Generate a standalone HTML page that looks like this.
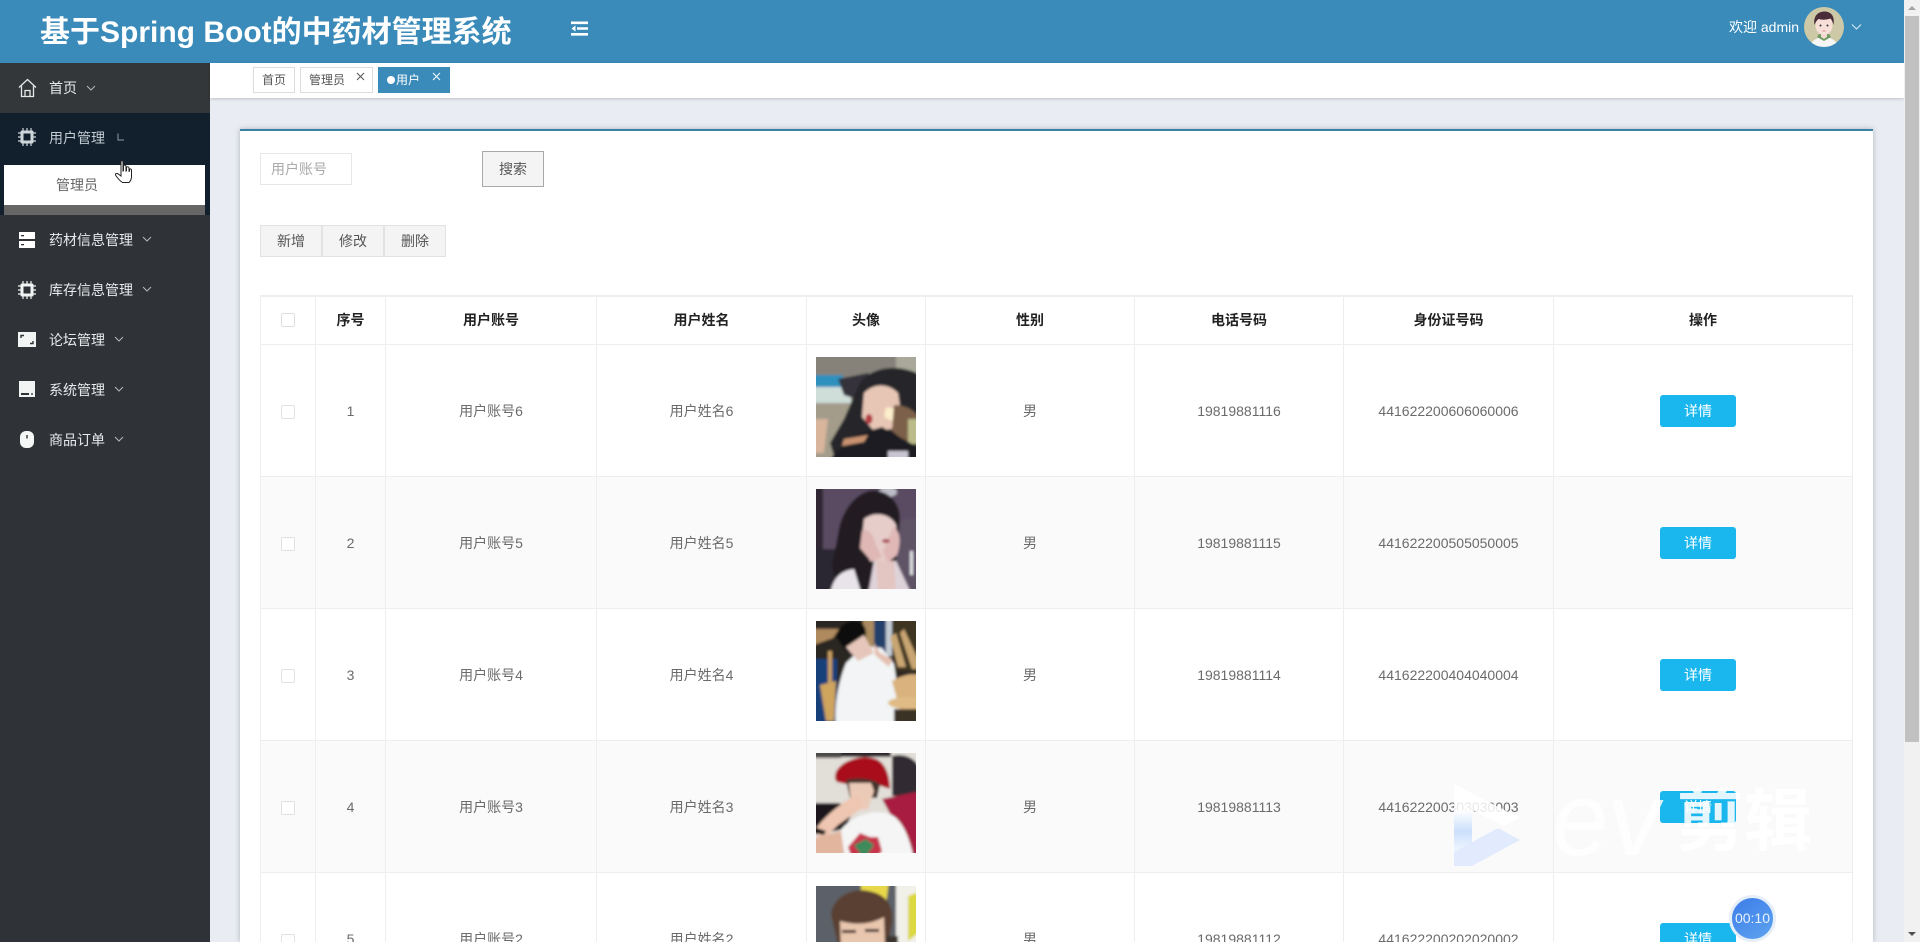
<!DOCTYPE html>
<html lang="zh"><head><meta charset="utf-8"><title>基于Spring Boot的中药材管理系统</title>
<style>
*{box-sizing:border-box}
html,body{margin:0;padding:0;width:1920px;height:942px;overflow:hidden;background:#e9ecf2;font-family:"Liberation Sans","Noto Sans CJK SC",sans-serif;font-size:14px;color:#666}
#wrap{position:absolute;left:0;top:0;width:1920px;height:942px;overflow:hidden;background:#e9ecf2}
.a{position:absolute}
#hd{left:0;top:0;width:1904px;height:63px;background:#3a8bba}
#title{left:40px;top:12px;font-size:30px;line-height:42px;font-weight:bold;color:#fff;white-space:nowrap}
#side{left:0;top:63px;width:210px;height:879px;background:#2f3337}
.mi{left:49px;font-size:14px;line-height:20px;color:#e8eaec;white-space:nowrap}
.ch{width:10px;height:10px}
#tabs{left:210px;top:63px;width:1694px;height:35px;background:#fff;box-shadow:0 1px 3px rgba(0,0,0,.18)}
.tab{top:67px;height:26px;line-height:24px;border:1px solid #ddd;background:#fff;font-size:12px;color:#555;white-space:nowrap}
.x{position:absolute;width:12px;height:12px}
#card{left:240px;top:129px;width:1633px;height:813px;background:#fff;border-top:2px solid #3d80a6;box-shadow:0 0 5px rgba(60,70,90,.35)}
.btn{top:225px;height:32px;width:62px;background:#f4f4f4;border:1px solid #e2e2e2;text-align:center;line-height:30px;color:#555;font-size:14px}
table{position:absolute;left:260px;top:295px;width:1592px;height:647px;border-collapse:collapse;table-layout:fixed;border-top:2px solid #eee}
th,td{border:1px solid #eceef0;text-align:center;padding:0;font-size:14px;overflow:hidden}
th{height:48px;color:#222;font-weight:bold}
th .cb{position:relative;top:-1px}
td{height:132px;color:#6b6b6b;padding-top:1px}
tr.s td{background:#fafafa}
tr.l td{height:69px;padding:0;vertical-align:top;border-bottom:0}
tr.l td>div{height:69px;overflow:hidden}
.cb{display:inline-block;width:14px;height:14px;border:1px solid #dfe1e4;border-radius:2px;background:#fff;vertical-align:middle}
.det{display:inline-block;width:76px;height:32px;line-height:32px;background:#1ab7ef;color:#fff;border-radius:3px;margin-right:10px;font-size:14px}
.ph{display:block;width:100px;height:100px;margin:0 auto;position:relative;top:-4px}
tr.l .ph{top:0}
#sb{left:1904px;top:0;width:16px;height:942px;background:#f1f1f1}
</style></head><body><div id="wrap">
<div class="a" id="card"></div>

<div class="a" id="hd"></div>
<div class="a" id="title">基于Spring Boot的中药材管理系统</div>
<svg class="a" style="left:570px;top:20px" width="19" height="17" viewBox="0 0 19 17"><path d="M1 1.5h17v2.6H1zM7 7.2h11v2.6H7zM1 13h17v2.6H1z" fill="#fff"/><path d="M5.5 5.500L1.500 8.500l4 3z" fill="#fff"/></svg>
<div class="a" style="left:1729px;top:17px;line-height:20px;font-size:14px;color:#fff;white-space:nowrap">欢迎 admin</div>
<svg class="a" style="left:1804px;top:7px" width="40" height="40" viewBox="0 0 40 40"><defs><clipPath id="av"><circle cx="20" cy="20" r="20"/></clipPath></defs><g clip-path="url(#av)"><rect width="40" height="40" fill="#cdc9a6"/><path d="M6 40c1-7 8-10 14-10s13 3 14 10z" fill="#f6f7f4"/><path d="M13 30l7 4 7-4-2-3H15z" fill="#6e9a62"/><path d="M17 26h6v4l-3 2-3-2z" fill="#f4d8cf"/><ellipse cx="20" cy="18" rx="8.600" ry="10" fill="#f7ded6"/><path d="M10.500 18C9 9 14 4.500 20.500 4.500S31 9 29.500 18c-1-3-1.500-5-3-6.500-4 1.500-9 1.500-12 .5-2 1.500-3 3.500-4 6z" fill="#4a2d3a"/><circle cx="16.500" cy="18.500" r="1" fill="#333"/><circle cx="23.500" cy="18.500" r="1" fill="#333"/><path d="M18.500 24h3" stroke="#d98c8c" stroke-width="1"/></g></svg>
<svg class="a" style="left:1851px;top:23px" width="11" height="8" viewBox="0 0 11 8"><path d="M1 1.500l4.500 4.500L10 1.500" fill="none" stroke="#d6e8f2" stroke-width="1.100"/></svg>

<div class="a" id="side"></div>
<div class="a" style="left:0;top:63px;width:210px;height:50px;background:#343739"></div>
<div class="a" style="left:0;top:113px;width:210px;height:102px;background:#12202e"></div>
<div class="a" style="left:4px;top:165px;width:201px;height:40px;background:#fff"></div>
<div class="a" style="left:4px;top:205px;width:201px;height:10px;background:#666"></div>
<div class="a" style="left:56px;top:175px;line-height:20px;font-size:14px;color:#666">管理员</div>

<svg class="a" style="left:18px;top:78px" width="19" height="20" viewBox="0 0 19 20"><path d="M1 9.500L9.500 1.500 18 9.500M3.500 8v10.500h12V8M7 18.500v-6h5v6" fill="none" stroke="#e6e8e8" stroke-width="1.300"/></svg>
<div class="a mi" style="top:78px">首页</div>
<svg class="a ch" style="left:86px;top:83px" viewBox="0 0 10 10"><path d="M1 3l4 4 4-4" fill="none" stroke="#b5b9bc"/></svg>

<svg class="a" style="left:18px;top:128px" width="18" height="18" viewBox="0 0 18 18"><path d="M4 2.500h10a1.500 1.500 0 0 1 1.500 1.500v10a1.500 1.500 0 0 1-1.500 1.500H4A1.500 1.500 0 0 1 2.500 14V4A1.500 1.500 0 0 1 4 2.500z" fill="#cfd6da"/><rect x="5.500" y="5.500" width="7" height="7" fill="#12202e"/><path d="M5 0v18M9 0v18M13 0v18M0 5h18M0 9h18M0 13h18" stroke="#cfd6da" stroke-width="1.200" stroke-dasharray="2.500 13 2.500 0"/></svg>
<div class="a mi" style="top:128px;color:#c3ccd2">用户管理</div>
<svg class="a ch" style="left:117px;top:133px" viewBox="0 0 10 10"><path d="M1 .5v6.500h6" fill="none" stroke="#8f9aa3"/></svg>

<svg class="a" style="left:19px;top:232px" width="16" height="16" viewBox="0 0 16 16"><rect y="0" width="16" height="7" fill="#fff"/><rect y="9" width="16" height="7" fill="#fff"/><rect x="2" y="3" width="3" height="1.300" fill="#2f3337"/><rect x="2" y="12" width="3" height="1.300" fill="#2f3337"/></svg>
<div class="a mi" style="top:230px">药材信息管理</div>
<svg class="a ch" style="left:142px;top:234px" viewBox="0 0 10 10"><path d="M1 3l4 4 4-4" fill="none" stroke="#b5b9bc"/></svg>

<svg class="a" style="left:18px;top:281px" width="18" height="18" viewBox="0 0 18 18"><path d="M4 2.500h10a1.500 1.500 0 0 1 1.500 1.500v10a1.500 1.500 0 0 1-1.500 1.500H4A1.500 1.500 0 0 1 2.500 14V4A1.500 1.500 0 0 1 4 2.500z" fill="#f2f3f3"/><rect x="5.500" y="5.500" width="7" height="7" fill="#2f3337"/><path d="M5 0v18M9 0v18M13 0v18M0 5h18M0 9h18M0 13h18" stroke="#f2f3f3" stroke-width="1.200" stroke-dasharray="2.500 13 2.500 0"/></svg>
<div class="a mi" style="top:280px">库存信息管理</div>
<svg class="a ch" style="left:142px;top:284px" viewBox="0 0 10 10"><path d="M1 3l4 4 4-4" fill="none" stroke="#b5b9bc"/></svg>

<svg class="a" style="left:18px;top:332px" width="18" height="15" viewBox="0 0 18 15"><rect width="18" height="15" fill="#f2f3f3"/><path d="M3 6V3.500h3M15 9v2.500h-3" fill="none" stroke="#2f3337" stroke-width="1.400"/></svg>
<div class="a mi" style="top:330px">论坛管理</div>
<svg class="a ch" style="left:114px;top:334px" viewBox="0 0 10 10"><path d="M1 3l4 4 4-4" fill="none" stroke="#b5b9bc"/></svg>

<svg class="a" style="left:19px;top:381px" width="16" height="16" viewBox="0 0 16 16"><rect width="16" height="16" fill="#f2f3f3"/><rect x="2" y="12" width="8" height="2" fill="#2f3337"/><rect x="12" y="12" width="2" height="2" fill="#777"/></svg>
<div class="a mi" style="top:380px">系统管理</div>
<svg class="a ch" style="left:114px;top:384px" viewBox="0 0 10 10"><path d="M1 3l4 4 4-4" fill="none" stroke="#b5b9bc"/></svg>

<svg class="a" style="left:20px;top:431px" width="14" height="17" viewBox="0 0 14 17"><rect width="14" height="17" rx="6" fill="#f5f6f6"/><rect x="6.300" y="4" width="1.400" height="3.500" fill="#2f3337"/></svg>
<div class="a mi" style="top:430px">商品订单</div>
<svg class="a ch" style="left:114px;top:434px" viewBox="0 0 10 10"><path d="M1 3l4 4 4-4" fill="none" stroke="#b5b9bc"/></svg>

<div class="a" id="tabs"></div>
<div class="a tab" style="left:253px;width:42px;text-align:center">首页</div>
<div class="a tab" style="left:300px;width:73px;padding-left:8px">管理员<svg class="x" style="left:54px;top:3px" viewBox="0 0 12 12"><path d="M2 2l7 7M9 2L2 9" stroke="#555" fill="none"/></svg></div>
<div class="a tab" style="left:378px;width:72px;padding-left:8px;background:#3a8bba;border-color:#3a8bba;color:#fff"><span style="display:inline-block;width:8px;height:8px;border-radius:50%;background:#fff;margin-right:1px"></span>用户<svg class="x" style="left:52px;top:3px" viewBox="0 0 12 12"><path d="M2 2l7 7M9 2L2 9" stroke="#fff" fill="none"/></svg></div>

<div class="a" style="left:260px;top:153px;width:92px;height:32px;background:#fff;border:1px solid #e4e6e8;line-height:30px;padding-left:10px;color:#aaa;font-size:14px">用户账号</div>
<div class="a" style="left:482px;top:151px;width:62px;height:36px;background:#f4f4f4;border:1px solid #a9a9a9;line-height:34px;text-align:center;color:#555">搜索</div>
<div class="a btn" style="left:260px">新增</div>
<div class="a btn" style="left:322px">修改</div>
<div class="a btn" style="left:384px">删除</div>

<table>
<colgroup><col style="width:55px"><col style="width:70px"><col style="width:211px"><col style="width:210px"><col style="width:119px"><col style="width:209px"><col style="width:209px"><col style="width:210px"><col style="width:299px"></colgroup>
<tr><th><span class="cb"></span></th><th>序号</th><th>用户账号</th><th>用户姓名</th><th>头像</th><th>性别</th><th>电话号码</th><th>身份证号码</th><th>操作</th></tr>
<tr><td><span class="cb"></span></td><td>1</td><td>用户账号6</td><td>用户姓名6</td><td>
<svg class="ph" viewBox="0 0 100 100"><defs><filter id="b" x="-5%" y="-5%" width="110%" height="110%"><feGaussianBlur stdDeviation="1.200"/></filter><clipPath id="c"><rect width="100" height="100"/></clipPath></defs><g clip-path="url(#c)"><g filter="url(#b)"><rect x="-5" y="-5" width="110" height="110" fill="#86827a"/><rect x="80" y="-5" width="25" height="22" fill="#a9a89a"/><rect x="-5" y="18" width="32" height="12" fill="#2f90bd"/><rect x="-5" y="30" width="40" height="16" fill="#cfded9"/><path d="M22 22l30-6 8 10-20 16-12-4z" fill="#34333a"/><rect x="-5" y="46" width="40" height="60" fill="#a39c8b"/><path d="M42 30C50 12 78 4 105 18v70l-30 10-55 8-6-20L28 62z" fill="#26252b"/><path d="M48 36c10-10 24-10 34 0l2 14-8 22-18 2-12-14z" fill="#e7c6b5"/><path d="M70 50l10 2-4 12-8-4z" fill="#fbeecb"/><ellipse cx="53" cy="62" rx="3.500" ry="5" fill="#b33b42"/><path d="M78 48c14 0 27 8 27 22l-14 16-15-12z" fill="#7d6149"/><path d="M92 62h13v25H92z" fill="#bcbb8a"/><path d="M-5 62h17L8 96H-5z" fill="#d8b59b"/><path d="M10 106L38 78l28-8 39 22v14z" fill="#1d1d24"/><path d="M28 82l24-4-4 7-22 4z" fill="#c99271"/><path d="M72 94h20v12H72z" fill="#c9c6d2"/></g></g></svg></td><td>男</td><td>19819881116</td><td>441622200606060006</td><td><span class="det">详情</span></td></tr>
<tr class="s"><td><span class="cb"></span></td><td>2</td><td>用户账号5</td><td>用户姓名5</td><td>
<svg class="ph" viewBox="0 0 100 100"><g clip-path="url(#c)"><g filter="url(#b)"><rect x="-5" y="-5" width="110" height="110" fill="#5a4c62"/><rect x="-5" y="-5" width="12" height="70" fill="#2e2630"/><rect x="-5" y="60" width="28" height="46" fill="#2b2630"/><rect x="62" y="30" width="43" height="76" fill="#5e5266"/><ellipse cx="72" cy="3" rx="9" ry="5" fill="#bcbcc6"/><path d="M22 45C26 15 48 -2 62 2c16 3 22 16 22 28l-4 42-30 30H22l-6-25z" fill="#241d24"/><path d="M48 30c10-8 26-6 32 6l2 26-8 10-20 0-8-22z" fill="#e6cdca"/><path d="M46 42c6-4 12 4 14 14l6 12-10 5-12-14z" fill="#dfb8b5"/><path d="M77 38c8 4 8 16 4 28l-10 8-4-12z" fill="#e0b9b7"/><ellipse cx="70" cy="52" rx="4" ry="2" fill="#a94a58"/><path d="M14 106c2-14 8-24 24-26l8 26z" fill="#e8e4ea"/><path d="M58 72h22l16 34H52z" fill="#dfd3da"/><path d="M60 72h18l2 34H62z" fill="#e3c5c1"/><rect x="94" y="62" width="3" height="24" fill="#e4e5e9"/></g></g></svg></td><td>男</td><td>19819881115</td><td>441622200505050005</td><td><span class="det">详情</span></td></tr>
<tr><td><span class="cb"></span></td><td>3</td><td>用户账号4</td><td>用户姓名4</td><td>
<svg class="ph" viewBox="0 0 100 100"><g clip-path="url(#c)"><g filter="url(#b)"><rect x="-5" y="-5" width="110" height="110" fill="#2a2620"/><rect x="47" y="-5" width="12" height="40" fill="#a98b5e"/><rect x="58" y="-5" width="12" height="40" fill="#23416a"/><rect x="70" y="-5" width="6" height="40" fill="#c4ccd4"/><path d="M76-5h29v55H80z" fill="#3c3524"/><path d="M-5 8h28l-6 9-22 8z" fill="#b08a5e"/><path d="M74 16l6-4 10 34h-8zM88 8l14 30v10l-6 0-12-36z" fill="#c9a672"/><rect x="-5" y="38" width="26" height="68" fill="#17417a"/><rect x="12" y="30" width="4" height="50" fill="#c89f63"/><path d="M4 64l16-4-2 40-8 0z" fill="#cfa45d"/><path d="M30 42C22 62 18 85 20 106h68l-6-35-4-28-12-16-18-2z" fill="#f2f4f5"/><path d="M20 16C24 -4 50 -5 50 12c0 10-4 16-10 20l-10-2z" fill="#0c0c11"/><path d="M30 26l18-12 10 18-16 8z" fill="#e6c6ba"/><path d="M58 22l6 10 12 6-3 8-14-12z" fill="#e5bfb0"/><path d="M76 60c10-6 20-8 29-6v35H84z" fill="#d9b27d"/><ellipse cx="92" cy="82" rx="20" ry="6" fill="#e0bb85"/><rect x="78" y="88" width="27" height="18" fill="#3a3125"/></g></g></svg></td><td>男</td><td>19819881114</td><td>441622200404040004</td><td><span class="det">详情</span></td></tr>
<tr class="s"><td><span class="cb"></span></td><td>4</td><td>用户账号3</td><td>用户姓名3</td><td>
<svg class="ph" viewBox="0 0 100 100"><g clip-path="url(#c)"><g filter="url(#b)"><rect x="-5" y="-5" width="110" height="110" fill="#e2ded8"/><rect x="-5" y="-5" width="30" height="10" fill="#4c4a48"/><rect x="25" y="-5" width="50" height="9" fill="#2a2829"/><path d="M-5 50h28l14 8-8 18-34 6z" fill="#1b191a"/><path d="M76 3c16-4 29 6 29 20v20H76z" fill="#302c33"/><path d="M66 46l39-8v68h-6z" fill="#a71c3f"/><path d="M20 19c6-12 26-18 40-13 10 4 14 18 14 30L56 30l-26 1-9-2c-3-3-2-7-1-10z" fill="#a9101f"/><path d="M30 27c10-3 26-2 34 4l-3 14H34z" fill="#44302a"/><path d="M33 30h22l3 8-6 18-16 2z" fill="#eccab8"/><path d="M-2 78c10-14 24-26 42-36l8 8-6 8-20 14-16 16z" fill="#eec6b1"/><path d="M24 78c10-14 32-22 46-18 12 2 22 16 28 46H22z" fill="#f5f5f5"/><path d="M32 94l12-14 10 4 8 0 4 14-6 8H36z" fill="#c8344c"/><path d="M38 92l12-6 8 6-10 14z" fill="#3c8a5a"/><path d="M-2 74l12 4-2 4-10-2z" fill="#111"/><path d="M-5 86l30-8 4 28H-5z" fill="#e2b59f"/></g></g></svg></td><td>男</td><td>19819881113</td><td>441622200303030003</td><td><span class="det">详情</span></td></tr>
<tr class="l"><td><div style="padding-top:59px"><span class="cb"></span></div></td><td><div style="padding-top:56px;line-height:20px">5</div></td><td><div style="padding-top:56px;line-height:20px">用户账号2</div></td><td><div style="padding-top:56px;line-height:20px">用户姓名2</div></td><td><div style="padding-top:13px">
<svg class="ph" viewBox="0 0 100 100"><g clip-path="url(#c)"><g filter="url(#b)"><rect x="-5" y="-5" width="110" height="110" fill="#5b6168"/><path d="M45-5h28l-3 23-25-8z" fill="#e8d84a"/><rect x="80" y="-5" width="25" height="110" fill="#f1f1ea"/><path d="M92 10l13-5v40l-13 10z" fill="#dcd840"/><path d="M15 28C18 8 40 2 52 5c18 3 26 14 24 32l-4 22H22z" fill="#5a4030"/><path d="M24 35c14 4 30 4 44-4l2 60H26z" fill="#e9c6ae"/><rect x="26" y="44" width="14" height="3" fill="#35241d"/><rect x="49" y="43" width="14" height="3" fill="#35241d"/><path d="M70 50h12v40H70z" fill="#3a342f"/><path d="M2 62l22 0v40H2z" fill="#4d5258"/></g></g></svg></div></td><td><div style="padding-top:56px;line-height:20px">男</div></td><td><div style="padding-top:56px;line-height:20px">19819881112</div></td><td><div style="padding-top:56px;line-height:20px">441622200202020002</div></td><td><div style="padding-top:50px"><span class="det">详情</span></div></td></tr>
</table>

<!-- watermark -->
<svg class="a" style="left:1450px;top:780px" width="76" height="90" viewBox="0 0 76 90"><defs><linearGradient id="g1" x1="0" y1="0" x2="0" y2="1"><stop offset="0" stop-color="#fff" stop-opacity=".85"/><stop offset=".5" stop-color="#c5dcfb" stop-opacity=".9"/><stop offset="1" stop-color="#f0f6ff" stop-opacity=".9"/></linearGradient></defs><path d="M4 4L70 38 54 46 22 30V64L4 72z" fill="#fff" fill-opacity=".85"/><path d="M4 30L22 30V64L4 72z" fill="url(#g1)"/><path d="M4 72l44-24 22 12-48 26-18 0z" fill="#dfeafd" fill-opacity=".95"/></svg>
<div class="a" style="left:1552px;top:770px;font-size:104px;line-height:100px;font-family:'Liberation Sans',sans-serif;color:rgba(255,255,255,.82);white-space:nowrap;transform:skewX(-6deg)">ev</div>
<div class="a" style="left:1676px;top:784px;font-size:68px;line-height:76px;font-weight:bold;color:rgba(255,255,255,.88);white-space:nowrap;font-family:'Liberation Sans','Noto Sans CJK SC',sans-serif">剪辑</div>

<!-- timer -->
<div class="a" style="left:1729px;top:895px;width:47px;height:47px;border-radius:50%;background:linear-gradient(145deg,#3c7be8,#5ea4f0);border:3px solid #e6eef8;color:#e8f2ff;font-size:14px;line-height:41px;text-align:center">00:10</div>

<!-- cursor -->
<svg class="a" style="left:114px;top:160px" width="21" height="24" viewBox="0 0 21 24"><path d="M7 1.500c0-1 2-1 2 0V11l.5-.2V5.500c1.500-.8 2.500 0 2.500 1V11l.5-.2V7c1.500-.6 2.500 0 2.500 1l0 3.200.5 0V9c1.200-.4 2 .2 2 1.200v6.300c0 3-1 4.500-2.500 6H8.500C6 21 3.500 18 1.800 15.500c-.9-1.600.5-2.700 2-1.800L7 16z" fill="#fff" stroke="#222" stroke-width="1"/></svg>

<div class="a" id="sb"><div class="a" style="left:1px;top:16px;width:14px;height:726px;background:#c1c1c1"></div><svg class="a" style="left:0;top:0" width="16" height="16"><path d="M4 10l4-4 4 4z" fill="#a3a3a3"/></svg><svg class="a" style="left:0;top:926px" width="16" height="16"><path d="M4 6l4 4 4-4z" fill="#505050"/></svg></div>
</div></body></html>
